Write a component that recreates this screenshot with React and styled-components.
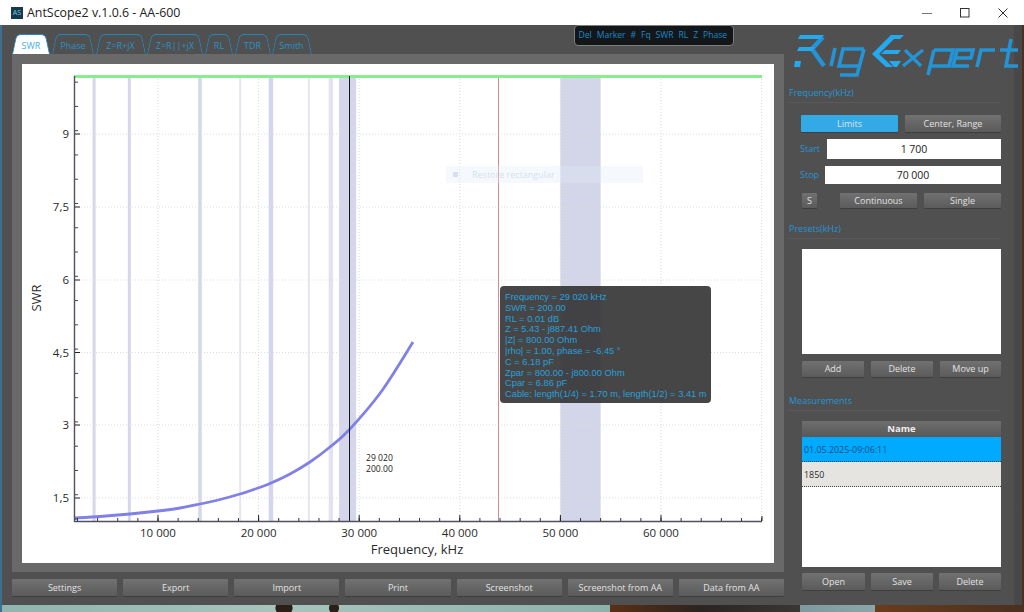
import React from "react";
import styled, { createGlobalStyle } from "styled-components";

const Global = createGlobalStyle`
  html, body { margin: 0; padding: 0; background: #3a3a3a; }
  * { box-sizing: border-box; }
`;

const UI = `"Open Sans", "Noto Sans", "Liberation Sans", sans-serif`;
const BLUE = "#2596d4";

const Screen = styled.div`
  width: 1024px;
  height: 612px;
  overflow: hidden;
  position: relative;
  display: flex;
  flex-direction: column;
  font-family: ${UI};
  background:
    linear-gradient(90deg, #3d6f92 0, #3d6f92 2px, transparent 2px),
    radial-gradient(ellipse 9px 8px at 284px 608px, #2a2018 90%, transparent 100%),
    radial-gradient(ellipse 5px 8px at 334px 608px, #2a2018 90%, transparent 100%),
    linear-gradient(90deg, #8fb5ae 0, #a6c4bc 280px, #8db2ac 610px, #5a3015 610px, #2b2420 700px, #3a3733 800px, #7c9aa0 800px, #8aa6a8 875px, #6a3d1c 875px, #4a3020 1024px);
`;

const TitleBar = styled.header`
  height: 25px;
  flex: none;
  background: #fff;
  display: flex;
  align-items: center;
  padding: 0 2px 0 11px;
  color: #222;
  font: 12.4px ${UI};
`;

const AppIcon = styled.span`
  width: 12px;
  height: 12px;
  background: #143a4c;
  color: #7fc6e6;
  font-size: 7px;
  line-height: 12px;
  text-align: center;
  margin-right: 4px;
`;

const TitleText = styled.span`
  flex: 1;
`;

const WinButton = styled.button`
  width: 38px;
  height: 25px;
  border: 0;
  padding: 0;
  background: none;
  display: flex;
  align-items: center;
  justify-content: center;
`;

const WindowBody = styled.div`
  width: 1020px;
  height: 580px;
  margin-left: 2px;
  background: #505050;
  display: flex;
  flex: none;
  position: relative;
  box-shadow: inset -8px 0 0 #484848;
`;

const LeftColumn = styled.main`
  width: 782px;
  padding: 9px 0 0 10px;
  flex: none;
  display: flex;
  flex-direction: column;
`;

const TabStrip = styled.nav`
  height: 20px;
  display: flex;
  gap: 2px;
  flex: none;
`;

const Tab = styled.div`
  width: ${(p) => p.$w}px;
  height: 20px;
  position: relative;
  text-align: center;
  font-size: 9px;
  line-height: 23px;
  color: ${(p) => (p.$active ? "#45aee2" : "#2a90c6")};
  z-index: 0;
  &::before,
  &::after {
    content: "";
    position: absolute;
    top: 0;
    bottom: 0;
    width: 50%;
    z-index: -1;
    border-top: 1px solid #2288be;
    background: ${(p) => (p.$active ? "#fff" : "transparent")};
  }
  &::before {
    left: 0;
    border-left: 1px solid #2288be;
    border-top-left-radius: 5px;
    transform: skewX(-12deg);
    transform-origin: bottom left;
  }
  &::after {
    right: 0;
    border-right: 1px solid #2288be;
    border-top-right-radius: 5px;
    transform: skewX(12deg);
    transform-origin: bottom right;
  }
`;

const PlotFrame = styled.section`
  width: 772px;
  height: 518px;
  background: #696969;
  padding: 10px 10px 9px 10px;
  flex: none;
`;

const PlotCanvas = styled.div`
  width: 752px;
  height: 499px;
  background: #fff;
  position: relative;
`;

const ChartSvg = styled.svg`
  display: block;
  width: 752px;
  height: 499px;
  font-family: ${UI};
`;

const GhostHint = styled.div`
  position: absolute;
  left: 424px;
  top: 102px;
  width: 197px;
  height: 17px;
  background: rgba(225, 236, 250, 0.34);
  color: rgba(170, 185, 210, 0.45);
  font-size: 9px;
  line-height: 17px;
  padding-left: 26px;
  &::before {
    content: "";
    position: absolute;
    left: 7px;
    top: 6px;
    width: 5px;
    height: 5px;
    background: rgba(170, 185, 210, 0.4);
  }
`;

const MarkerTip = styled.div`
  position: absolute;
  left: 478px;
  top: 222px;
  width: 211px;
  height: 117px;
  background: rgba(50, 50, 50, 0.9);
  border-radius: 4px;
  color: #26a0de;
  font: 9.3px/10.8px "Liberation Sans", Arial, sans-serif;
  padding: 6px 0 0 5px;
  white-space: nowrap;
`;

const ButtonRow = styled.div`
  display: flex;
  gap: 6px;
  margin-top: 7px;
  width: 772px;
`;

const Btn = styled.button`
  height: ${(p) => p.$h || 17}px;
  width: ${(p) => (p.$w ? `${p.$w}px` : "auto")};
  flex: ${(p) => (p.$w ? "none" : "1")};
  margin-left: ${(p) => p.$ml || 0}px;
  margin-right: ${(p) => p.$mr || 0}px;
  border: 0;
  border-radius: 1px;
  padding: 0;
  background: ${(p) =>
    p.$on ? "#33a9e6" : "linear-gradient(#717171, #5b5b5b)"};
  box-shadow: 0 1px 0 #3e3e3e;
  color: #e2e2e2;
  font: 9px ${UI};
`;

const SideColumn = styled.aside`
  width: 238px;
  flex: none;
  padding: 0 21px 0 5px;
  display: flex;
  flex-direction: column;
`;

const LogoBox = styled.svg`
  display: block;
  width: 244px;
  height: 60px;
  margin: 0 0 1.5px -4px;
  flex: none;
`;

const GroupTitle = styled.h2`
  margin: ${(p) => p.$mt || 0}px 0 0;
  font: 9px/12px ${UI};
  color: ${BLUE};
  height: 12px;
  flex: none;
`;

const Group = styled.section`
  border-top: 1px solid #5a5a5a;
  margin-top: 3px;
  padding: ${(p) => p.$pad || 12}px 0 0 ${(p) => p.$inset || 12}px;
  flex: none;
  display: flex;
  flex-direction: column;
`;

const Row = styled.div`
  display: flex;
  align-items: center;
  gap: ${(p) => p.$gap ?? 6}px;
  margin-top: ${(p) => p.$mt || 0}px;
`;

const FieldLabel = styled.label`
  width: ${(p) => p.$w}px;
  margin-left: -1px;
  flex: none;
  color: ${BLUE};
  font-size: 9px;
`;

const FieldValue = styled.div`
  flex: 1;
  height: ${(p) => p.$h}px;
  background: #fff;
  color: #222;
  text-align: center;
  font-size: 10.5px;
  line-height: ${(p) => p.$h}px;
`;

const ListBox = styled.div`
  width: 199px;
  height: ${(p) => p.$h}px;
  background: #fff;
  flex: none;
`;

const TableBox = styled.div`
  width: 199px;
  height: 146.5px;
  background: #fff;
  flex: none;
`;

const TableHead = styled.div`
  height: 16px;
  background: linear-gradient(#6e6e6e, #585858);
  color: #eee;
  font: bold 9.5px/16px ${UI};
  text-align: center;
`;

const TableRow = styled.div`
  height: 25px;
  padding-left: 2px;
  font-size: 8.9px;
  line-height: 25px;
  color: ${(p) => (p.$sel ? "#0b4f86" : "#2a2a2a")};
  background: ${(p) => (p.$sel ? "#00aaff" : "#e6e4e1")};
  border-bottom: 1px dotted #444;
`;

const DelPanel = styled.div`
  position: absolute;
  left: 572px;
  top: 0;
  width: 160px;
  height: 21px;
  background: #14171a;
  border: 1px solid #7d7d7d;
  border-radius: 4px;
  color: #1e87c2;
  font-size: 8.6px;
  line-height: 19px;
  padding-left: 3.5px;
  word-spacing: 2.7px;
  white-space: nowrap;
`;

/* ---------- chart data, in page coordinates ---------- */
const OX = 22;
const OY = 64;
const xOf = (khz) => 74.5 + (khz - 1700) * 0.01006;
const bands = [
  [3500, 3800, "#d6d7ea"], [7000, 7300, "#d6d7ea"], [14000, 14350, "#d6d7ea"],
  [18068, 18268, "#e6e6f2"], [21000, 21450, "#d3d6ec"], [24890, 25090, "#e6e6f2"],
  [26965, 27405, "#e2e2f0"], [28000, 29700, "#d5d6e9"], [50000, 54000, "#d3d5e9"],
];
const xMajor = [10000, 20000, 30000, 40000, 50000, 60000];
const yMajor = [["9", 134], ["7,5", 207], ["6", 280], ["4,5", 352.5], ["3", 425], ["1,5", 498]];
const curvePts = [
  [74, 518], [100, 516.5], [130, 514], [158, 511], [180, 508], [200, 504], [220, 499.5],
  [240, 494], [258, 488], [270, 483.5], [290, 474], [310, 462], [330, 447], [349, 430],
  [381, 392], [413, 342],
];
const smooth = (pts) => {
  let d = `M${pts[0][0]} ${pts[0][1]}`;
  for (let i = 0; i < pts.length - 1; i++) {
    const p0 = pts[Math.max(i - 1, 0)];
    const p1 = pts[i];
    const p2 = pts[i + 1];
    const p3 = pts[Math.min(i + 2, pts.length - 1)];
    const c1 = [p1[0] + (p2[0] - p0[0]) / 6, p1[1] + (p2[1] - p0[1]) / 6];
    const c2 = [p2[0] - (p3[0] - p1[0]) / 6, p2[1] - (p3[1] - p1[1]) / 6];
    d += `C${c1[0]} ${c1[1]} ${c2[0]} ${c2[1]} ${p2[0]} ${p2[1]}`;
  }
  return d;
};

const Chart = () => {
  const minorX = [];
  for (let k = 2000; k <= 70000; k += 2000) minorX.push(k);
  const minorY = [];
  for (let y = 521 - 2; y > 76; y -= 24.27) minorY.push(y);
  return (
    <ChartSvg viewBox={`${OX} ${OY} 752 499`}>
      {bands.map(([a, b, c]) => (
        <rect key={a} x={xOf(a)} y="76" width={xOf(b) - xOf(a)} height="445" fill={c} />
      ))}
      {[...xMajor, 70000].map((k) => (
        <line key={k} x1={xOf(k)} x2={xOf(k)} y1="76" y2="521" stroke="#d8d8d8" strokeDasharray="1 2" />
      ))}
      {yMajor.map(([t, y]) => (
        <line key={t} x1="75" x2="762" y1={y} y2={y} stroke="#dcdcdc" strokeDasharray="1 2" />
      ))}
      <line x1="498.5" x2="498.5" y1="76" y2="521" stroke="#d98a86" />
      <line x1="74" x2="762" y1="76.5" y2="76.5" stroke="#86ee8c" strokeWidth="3" />
      <path d={smooth(curvePts)} fill="none" stroke="#8080e6" strokeWidth="2.8" />
      <line x1="349.5" x2="349.5" y1="76" y2="521" stroke="#14141e" />
      <line x1="74.5" x2="74.5" y1="76" y2="522" stroke="#505060" strokeWidth="1.4" />
      <line x1="74" x2="762" y1="521.5" y2="521.5" stroke="#505060" strokeWidth="1.4" />
      <line x1="762" x2="762" y1="516" y2="521" stroke="#222" />
      {minorX.map((k) => (
        <line key={k} x1={xOf(k)} x2={xOf(k)} y1="518" y2="521" stroke="#333" />
      ))}
      {xMajor.map((k) => (
        <React.Fragment key={k}>
          <line x1={xOf(k)} x2={xOf(k)} y1="515" y2="521" stroke="#222" />
          <text x={xOf(k)} y="537" textAnchor="middle" fontSize="11.5" fill="#2a2a2a">
            {k / 1000} 000
          </text>
        </React.Fragment>
      ))}
      {minorY.map((y) => (
        <line key={y} x1="75" x2="78" y1={y} y2={y} stroke="#444" />
      ))}
      {yMajor.map(([t, y]) => (
        <React.Fragment key={t}>
          <line x1="75" x2="80" y1={y} y2={y} stroke="#222" />
          <text x="69" y={y + 4} textAnchor="end" fontSize="11.5" fill="#2a2a2a">{t}</text>
        </React.Fragment>
      ))}
      <text x="417" y="554" textAnchor="middle" fontSize="13" fill="#2a2a2a">Frequency, kHz</text>
      <text transform="translate(41 298) rotate(-90)" textAnchor="middle" fontSize="13" fill="#2a2a2a">SWR</text>
      <text x="366" y="461" fontSize="8.6" fill="#222">29 020</text>
      <text x="366" y="472" fontSize="8.6" fill="#222">200.00</text>
    </ChartSvg>
  );
};

const Logo = () => (
  <LogoBox viewBox="0 0 244 60" role="img" aria-label="RigExpert logo">
    <g fill="none" stroke="#2394d6" strokeWidth="3.6">
      <path d="M38 12 L27 24 L39 41" strokeWidth="4.4" />
      <path d="M50 23 L46 41" />
      <path d="M79 24 H58 L54 41 H74 M79 24 L72 50 H55" />
      <path d="M120 25 L136 41 M138 25 L118 41" strokeWidth="3.2" />
      <path d="M149 25 L143 50 M149 25 H168 L164 41 H146" />
      <path d="M170 33 H186 L188 25 H172 L168 41 H184" />
      <path d="M192 42 L196 25 H210" />
      <path d="M226 14 L221 41 H233 M215 25 H233" />
    </g>
    <g fill="#24a8ee">
      <polygon points="15,10 39,10 35,14 13,14" />
      <polygon points="14,22 30,22 27,26 12,26" />
      <polygon points="10,36 16,36 15,42 9,42" />
      <polygon points="87,29 106,10 113,10 94,29 108,42 101,42" />
      <polygon points="106,10 119,10 115,14 103,14" />
      <polygon points="100,25 116,25 113,29 96,29" />
      <polygon points="104,36 116,36 112,42 109,42" />
    </g>
  </LogoBox>
);

const tabs = [["SWR", 38], ["Phase", 42], ["Z=R+jX", 49], ["Z=R||+jX", 56], ["RL", 28], ["TDR", 35], ["Smith", 39]];
const bottomButtons = ["Settings", "Export", "Import", "Print", "Screenshot", "Screenshot from AA", "Data from AA"];
const tipLines = [
  "Frequency = 29 020 kHz", "SWR = 200.00", "RL = 0.01 dB", "Z = 5.43 - j887.41 Ohm",
  "|Z| = 800.00 Ohm", "|rho| = 1.00, phase = -6.45 °", "C = 6.18 pF",
  "Zpar = 800.00 - j800.00 Ohm", "Cpar = 6.86 pF",
  "Cable: length(1/4) = 1.70 m, length(1/2) = 3.41 m",
];

export default function App() {
  return (
    <Screen>
      <Global />
      <TitleBar>
        <AppIcon>AS</AppIcon>
        <TitleText>AntScope2 v.1.0.6 - AA-600</TitleText>
        <WinButton aria-label="Minimize">
          <svg width="10" height="10"><path d="M0 5.5H10" stroke="#777" /></svg>
        </WinButton>
        <WinButton aria-label="Maximize">
          <svg width="10" height="10"><rect x=".5" y=".5" width="8.5" height="8.5" fill="none" stroke="#333" /></svg>
        </WinButton>
        <WinButton aria-label="Close">
          <svg width="10" height="10"><path d="M.5.5 9.5 9.5M9.5.5.5 9.5" stroke="#333" /></svg>
        </WinButton>
      </TitleBar>
      <WindowBody>
        <DelPanel>Del Marker # Fq SWR RL Z Phase</DelPanel>
        <LeftColumn>
          <TabStrip>
            {tabs.map(([t, w], i) => (
              <Tab key={t} $w={w} $active={i === 0}>{t}</Tab>
            ))}
          </TabStrip>
          <PlotFrame>
            <PlotCanvas>
              <Chart />
              <GhostHint>Restore rectangular</GhostHint>
              <MarkerTip>
                {tipLines.map((l) => <div key={l}>{l}</div>)}
              </MarkerTip>
            </PlotCanvas>
          </PlotFrame>
          <ButtonRow>
            {bottomButtons.map((t) => <Btn key={t}>{t}</Btn>)}
          </ButtonRow>
        </LeftColumn>
        <SideColumn>
          <Logo />
          <GroupTitle>Frequency(kHz)</GroupTitle>
          <Group $pad={12}>
            <Row $gap={7}>
              <Btn $on $w={97}>Limits</Btn>
              <Btn $w={96}>Center, Range</Btn>
            </Row>
            <Row $gap={0} $mt={7}>
              <FieldLabel $w={27}>Start</FieldLabel>
              <FieldValue $h={20}>1 700</FieldValue>
            </Row>
            <Row $gap={0} $mt={7}>
              <FieldLabel $w={25}>Stop</FieldLabel>
              <FieldValue $h={18}>70 000</FieldValue>
            </Row>
            <Row $gap={7} $mt={9}>
              <Btn $w={15} $h={15} $ml={1} $mr={16}>S</Btn>
              <Btn $w={77} $h={15}>Continuous</Btn>
              <Btn $w={77} $h={15}>Single</Btn>
            </Row>
          </Group>
          <GroupTitle $mt={15}>Presets(kHz)</GroupTitle>
          <Group $pad={10} $inset={13}>
            <ListBox $h={105} />
            <Row $gap={7} $mt={7}>
              <Btn $w={62} $h={16}>Add</Btn>
              <Btn $w={62} $h={16}>Delete</Btn>
              <Btn $w={61} $h={16}>Move up</Btn>
            </Row>
          </Group>
          <GroupTitle $mt={18}>Measurements</GroupTitle>
          <Group $pad={10} $inset={13}>
            <TableBox>
              <TableHead>Name</TableHead>
              <TableRow $sel>01.05.2025-09:06:11</TableRow>
              <TableRow>1850</TableRow>
            </TableBox>
            <Row $gap={6} $mt={6}>
              <Btn $w={63} $h={17}>Open</Btn>
              <Btn $w={62} $h={17}>Save</Btn>
              <Btn $w={62} $h={17}>Delete</Btn>
            </Row>
          </Group>
        </SideColumn>
      </WindowBody>
    </Screen>
  );
}
